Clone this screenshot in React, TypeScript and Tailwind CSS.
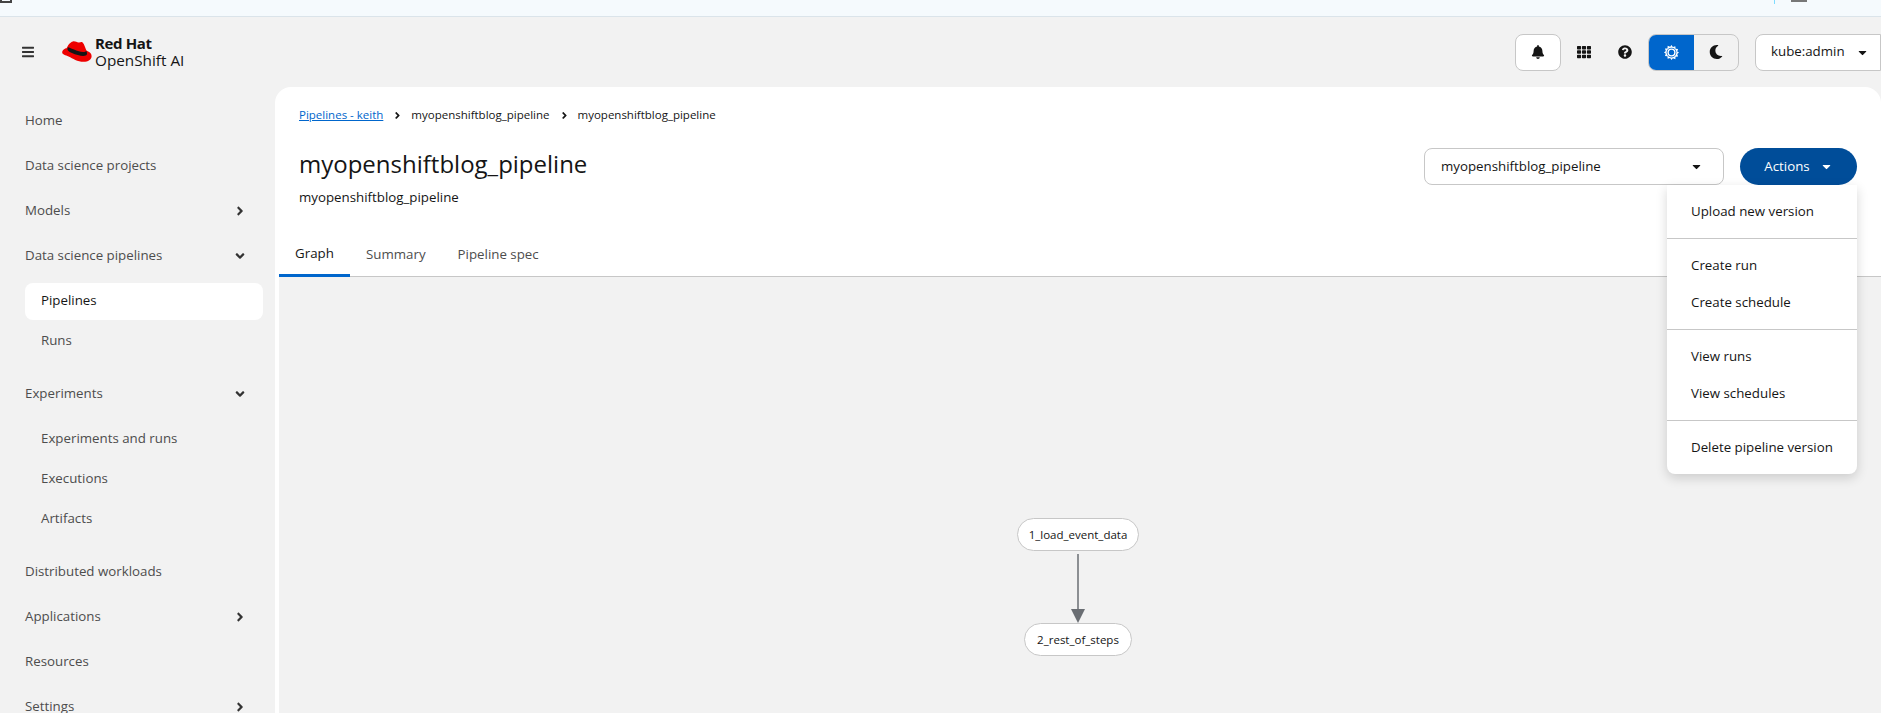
import { FaAngleDown, FaAngleRight, FaBars, FaBell, FaCaretDown, FaMoon, FaQuestionCircle, FaTh } from "react-icons/fa";

const menuGroups = [
  ["Upload new version"],
  ["Create run", "Create schedule"],
  ["View runs", "View schedules"],
  ["Delete pipeline version"],
];

function NavRow({ label, chevron }: { label: string; chevron?: "right" | "down" }) {
  return (
    <div className="flex h-[45px] items-center justify-between pl-[25px] pr-[16px] text-[#4d4d4d]">
      <span>{label}</span>
      {chevron === "right" && <FaAngleRight className="h-[14px] w-[14px] text-[#333]" />}
      {chevron === "down" && <FaAngleDown className="h-[14px] w-[14px] text-[#333]" />}
    </div>
  );
}

function SubRow({ label, active }: { label: string; active?: boolean }) {
  return (
    <div className="flex h-[40px] items-center">
      <div
        className={
          active
            ? "flex h-[37px] w-full items-center rounded-lg bg-white pl-4 text-[#151515]"
            : "flex h-[37px] w-full items-center pl-4 text-[#4d4d4d]"
        }
      >
        {label}
      </div>
    </div>
  );
}

function Sidebar() {
  return (
    <nav className="w-[275px] shrink-0 pr-[12px] pt-[11px] text-[13.3px]">
      <NavRow label="Home" />
      <NavRow label="Data science projects" />
      <NavRow label="Models" chevron="right" />
      <NavRow label="Data science pipelines" chevron="down" />
      <div className="mb-[10px] ml-[25px] pt-[3px]">
        <SubRow label="Pipelines" active />
        <SubRow label="Runs" />
      </div>
      <NavRow label="Experiments" chevron="down" />
      <div className="mb-[10px] ml-[25px] pt-[3px]">
        <SubRow label="Experiments and runs" />
        <SubRow label="Executions" />
        <SubRow label="Artifacts" />
      </div>
      <NavRow label="Distributed workloads" />
      <NavRow label="Applications" chevron="right" />
      <NavRow label="Resources" />
      <NavRow label="Settings" chevron="right" />
    </nav>
  );
}

function SunIcon() {
  return (
    <svg viewBox="0 0 16 16" className="h-[15px] w-[15px]" fill="white">
      <path d="M8 0l1.5 2.2 2.6-.9.2 2.7 2.7.2-.9 2.6L16 8l-1.9 1.6.9 2.6-2.7.2-.2 2.7-2.6-.9L8 16l-1.5-2.2-2.6.9-.2-2.7-2.7-.2.9-2.6L0 8l1.9-1.6-.9-2.6 2.7-.2.2-2.7 2.6.9z" />
      <circle cx="8" cy="8" r="5.2" fill="#0066cc" />
      <circle cx="8" cy="8" r="3.6" fill="#0066cc" stroke="white" strokeWidth="1.5" />
    </svg>
  );
}

function Masthead() {
  return (
    <header className="flex h-[70px] items-center justify-between">
      <div className="flex items-center">
        <FaBars className="ml-[22px] h-[14px] w-[12px] text-[#333]" />
        <svg viewBox="0 0 30 22" className="ml-[28px] h-[22px] w-[30px]">
          <path
            d="M11 .4C13.4 0 15 1.6 17 1.4 19 1.2 19.6.6 20.6 1.6 22.2 3.2 23.4 7 24.4 9.6 26.8 10.6 29.6 12.2 29.6 15.2 29.6 18.6 26 20.8 21.6 20.8 15.4 20.8 10.8 17.4 6.6 15.4 3.6 14 .2 13.4.2 11.4.2 9 3 7.2 4.6 7.2 5.8 4.4 8 .9 11 .4Z"
            fill="#ee0000"
          />
          <path
            d="M5.6 7.4C5 9 6.4 10.4 10 12 14.4 14 19.6 15.4 23 14.8 25 14.4 25.4 13 24.8 11.2 24.6 10.6 24.5 10.2 24.4 9.8 23.4 11.4 20 11.4 16 10 11.4 8.4 7.6 6.6 6.2 6.2 5.9 6.6 5.7 7 5.6 7.4Z"
            fill="#151515"
          />
        </svg>
        <div className="ml-[3px] flex flex-col text-[#151515]">
          <span className="text-[15px] leading-[17px] font-bold tracking-tight">Red Hat</span>
          <span className="text-[15.3px] leading-[17px]">OpenShift AI</span>
        </div>
      </div>
      <div className="flex items-center">
        <button className="flex h-[37px] w-[46px] items-center justify-center rounded-lg border border-[#c7c7c7] bg-white">
          <FaBell className="h-[14px] w-[14px] text-[#151515]" />
        </button>
        <FaTh className="ml-[16px] h-[14px] w-[14px] text-[#151515]" />
        <FaQuestionCircle className="ml-[27px] h-[14px] w-[14px] text-[#151515]" />
        <div className="ml-[16px] flex h-[37px] w-[91px] overflow-hidden rounded-lg border border-[#c7c7c7]">
          <div className="-my-px -ml-px flex w-[46px] items-center justify-center bg-[#0066cc]">
            <SunIcon />
          </div>
          <div className="flex flex-1 items-center justify-center">
            <FaMoon className="h-[14px] w-[14px] text-[#151515]" />
          </div>
        </div>
        <button className="ml-[16px] flex h-[37px] w-[126px] items-center gap-[11px] rounded-l-lg border border-[#c7c7c7] bg-white pl-[15px] text-[13.3px] text-[#151515]">
          kube:admin
          <FaCaretDown className="h-[13px] w-[13px]" />
        </button>
      </div>
    </header>
  );
}

function ActionsMenu() {
  return (
    <div className="absolute top-[37px] right-0 z-10 w-[190px] rounded-b-lg bg-white text-[13.3px] text-[#151515] shadow-[0_4px_12px_rgba(3,3,3,0.16)]">
      {menuGroups.map((group, i) => (
        <div key={group[0]} className={i > 0 ? "border-t border-[#c7c7c7] py-[8px]" : "py-[8px]"}>
          {group.map((item) => (
            <div key={item} className="flex h-[37px] items-center pl-6">
              {item}
            </div>
          ))}
        </div>
      ))}
    </div>
  );
}

function PipelineGraph() {
  return (
    <div className="relative min-h-0 flex-1 overflow-hidden bg-[#f2f2f2]">
      <div className="absolute top-[241px] left-[738px] flex h-[33px] w-[122px] items-center justify-center rounded-full border border-[#c7c7c7] bg-white text-[11.5px] text-[#151515]">
        1_load_event_data
      </div>
      <svg className="absolute top-[277px] left-[789px]" width="20" height="70">
        <line x1="10" y1="0" x2="10" y2="56" stroke="#6a6e73" strokeWidth="1.5" />
        <polygon points="3,55 17,55 10,69" fill="#6a6e73" />
      </svg>
      <div className="absolute top-[346px] left-[745px] flex h-[33px] w-[108px] items-center justify-center rounded-full border border-[#c7c7c7] bg-white text-[11.5px] text-[#151515]">
        2_rest_of_steps
      </div>
    </div>
  );
}

function PipelinePanel() {
  return (
    <main className="flex min-w-0 flex-1 flex-col rounded-t-[16px] bg-white pl-[4px]">
      <div className="flex items-center pt-[21px] pl-[20px] text-[11.5px] leading-[14px] text-[#151515]">
        <a className="text-[#0066cc] underline">Pipelines - keith</a>
        <FaAngleRight className="mr-[8px] ml-[9px] h-[11px] w-[11px]" />
        <span>myopenshiftblog_pipeline</span>
        <FaAngleRight className="mr-[8px] ml-[9px] h-[11px] w-[11px]" />
        <span>myopenshiftblog_pipeline</span>
      </div>
      <div className="flex justify-between pt-[26px] pr-[24px] pl-[20px]">
        <div>
          <h1 className="text-2xl leading-[32px] font-medium text-[#151515]">myopenshiftblog_pipeline</h1>
          <p className="pt-[7px] text-[13.3px] leading-[20px] text-[#151515]">myopenshiftblog_pipeline</p>
        </div>
        <div className="flex items-start gap-[16px]">
          <button className="flex h-[37px] w-[300px] items-center justify-between rounded-lg border border-[#c7c7c7] bg-white pr-[20px] pl-[16px] text-[13.3px] text-[#151515]">
            myopenshiftblog_pipeline
            <FaCaretDown className="h-[13px] w-[13px]" />
          </button>
          <div className="relative">
            <button className="flex h-[37px] w-[117px] items-center justify-center gap-[10px] rounded-full bg-[#004d99] text-[13.3px] text-white">
              Actions
              <FaCaretDown className="h-[13px] w-[13px]" />
            </button>
            <ActionsMenu />
          </div>
        </div>
      </div>
      <div className="mt-[24px] flex h-[46px] border-b border-[#c7c7c7] pt-[2px] text-[13.3px] text-[#4d4d4d]">
        <div className="-mb-px flex w-[71px] items-center justify-center border-b-[3px] border-[#0066cc] text-[#151515]">Graph</div>
        <div className="flex items-center pl-[16px]">Summary</div>
        <div className="flex items-center pl-[32px]">Pipeline spec</div>
      </div>
      <PipelineGraph />
    </main>
  );
}

export default function App() {
  return (
    <div className="flex h-[713px] flex-col overflow-hidden bg-[#f2f2f2] font-['Open_Sans',sans-serif]">
      <div className="relative h-[17px] shrink-0 border-b border-[#dbe4ea] bg-[#f5fafd]">
        <div className="absolute top-0 left-0 h-[3px] w-[12px] border-x-2 border-b-2 border-[#444]" />
        <div className="absolute top-0 left-[1774px] h-[4px] w-[1px] bg-[#7fdcff]" />
        <div className="absolute top-0 left-[1791px] h-[2px] w-[16px] bg-[#777]" />
      </div>
      <Masthead />
      <div className="flex min-h-0 flex-1">
        <Sidebar />
        <PipelinePanel />
      </div>
    </div>
  );
}
